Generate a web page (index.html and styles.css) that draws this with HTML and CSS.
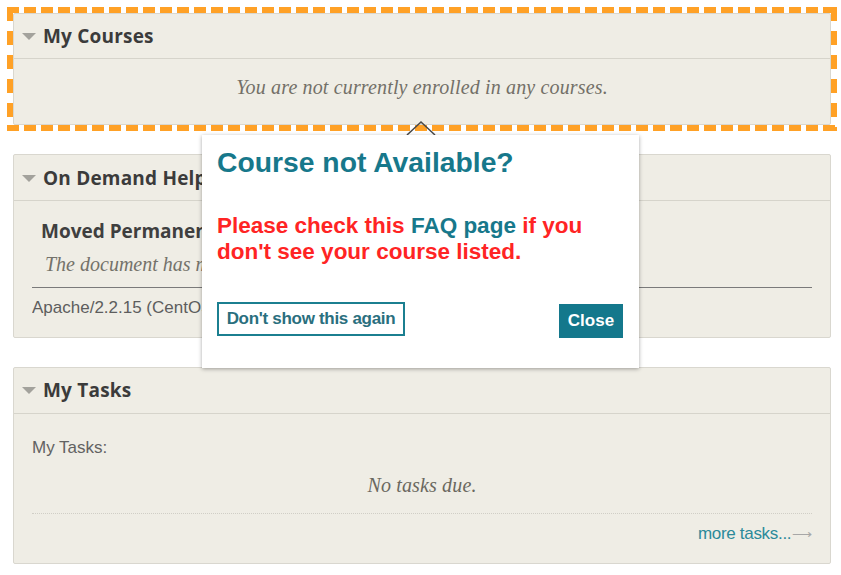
FILE: index.html
```html
<!DOCTYPE html>
<html>
<head>
<meta charset="utf-8">
<link rel="stylesheet" href="styles.css">
</head>
<body>
<div class="page">
  <div class="highlight">
    <section class="panel courses">
      <header class="panel-head"><span class="tri"></span><h2>My Courses</h2></header>
      <div class="panel-body center-msg">
        <p class="empty">You are not currently enrolled in any courses.</p>
      </div>
    </section>
  </div>

  <section class="panel help">
    <header class="panel-head"><span class="tri"></span><h2>On Demand Help</h2></header>
    <div class="panel-body help-body">
      <h1 class="moved">Moved Permanently</h1>
      <p class="doc">The document has moved <a href="#">here</a>.</p>
      <hr class="rule">
      <address class="server">Apache/2.2.15 (CentOS) Server at help.example.edu Port 80</address>
    </div>
  </section>

  <section class="panel tasks">
    <header class="panel-head"><span class="tri"></span><h2>My Tasks</h2></header>
    <div class="panel-body tasks-body">
      <p class="label">My Tasks:</p>
      <p class="empty no-tasks">No tasks due.</p>
      <div class="more-row"><a class="more" href="#">more tasks...<span class="arrow">⟶</span></a></div>
    </div>
  </section>
</div>

<svg class="pointer" width="32" height="16" viewBox="0 0 32 16">
  <polyline points="2,15 16,2 30,15" fill="none" stroke="#4a4a4a" stroke-width="1.6"/>
</svg>
<div class="popup">
  <h3 class="pop-title">Course not Available?</h3>
  <p class="pop-msg">Please check this <a href="#" class="faq">FAQ page</a> if you don't see your course listed.</p>
  <div class="pop-actions">
    <button class="btn-outline">Don't show this again</button>
    <button class="btn-solid">Close</button>
  </div>
</div>
</body>
</html>
```
FILE: styles.css
```css
* { box-sizing: border-box; }
html, body { margin: 0; padding: 0; background: #ffffff; }
body { width: 841px; height: 575px; overflow: hidden; position: relative; font-family: "Liberation Sans", Arial, sans-serif; }

.page { padding: 13px 10px 0 13px; }

.highlight {
  margin: -6px -6px 23px -6px;
  padding: 6px;
  background:
    repeating-linear-gradient(90deg, #ffa126 0 12px, transparent 12px 17px) left top / 100% 6px no-repeat,
    repeating-linear-gradient(90deg, #ffa126 0 12px, transparent 12px 17px) left bottom / 100% 6px no-repeat,
    repeating-linear-gradient(180deg, #ffa126 0 14px, transparent 14px 24px) left top / 6px 100% no-repeat,
    repeating-linear-gradient(180deg, #ffa126 0 14px, transparent 14px 24px) right top / 6px 100% no-repeat;
}

.panel {
  background: #efede5;
  border: 1px solid #d9d7cf;
  border-radius: 2px;
}
.help { margin-bottom: 29px; }

.panel-head {
  display: flex;
  align-items: center;
  height: 45px;
  padding-left: 8px;
  border-bottom: 1px solid #d6d4cb;
}
.help .panel-head, .tasks .panel-head { height: 46px; }
.tasks .panel-head { padding-bottom: 2px; }
.tri {
  width: 0; height: 0;
  border-left: 7px solid transparent;
  border-right: 7px solid transparent;
  border-top: 7px solid #a3a29c;
  margin-right: 7px;
  margin-top: 1px;
}
.panel-head h2 {
  margin: 0;
  font-family: "Open Sans", "Liberation Sans", sans-serif;
  font-weight: 700;
  font-size: 19px;
  color: #3b3b3b;
  letter-spacing: 0.2px;
}

.center-msg { height: 65px; display: flex; align-items: center; justify-content: center; padding-bottom: 8px; }
.empty {
  margin: 0;
  font-family: "Liberation Serif", "Times New Roman", serif;
  font-style: italic;
  font-size: 20px;
  letter-spacing: 0.15px;
  color: #737068;
}

.help-body { padding: 14px 18px 15px 18px; height: 136px; }
.moved {
  margin: 0 0 0 9px;
  font-family: "Open Sans", "Liberation Sans", sans-serif;
  font-weight: 700;
  font-size: 19px;
  color: #3f3f3f;
  line-height: 32px;
  white-space: nowrap;
}
.doc {
  margin: 0 0 0 13px;
  font-family: "Liberation Serif", serif;
  font-style: italic;
  font-size: 20px;
  color: #74726a;
  line-height: 34px;
  white-space: nowrap;
}
.doc a { color: #74726a; text-decoration: none; }
.rule { margin: 6px 0 0 0; border: 0; border-top: 1px solid #7a7a7a; }
.server {
  font-style: normal;
  font-size: 17px;
  color: #5d5d5d;
  line-height: 40px;
  white-space: nowrap;
  overflow: hidden;
}

.tasks-body { padding: 22px 18px 0 18px; height: 149px; }
.label { margin: 0; font-size: 17px; color: #626262; line-height: 24px; }
.no-tasks {
  text-align: center;
  line-height: 30px;
  margin-top: 10px;
  padding-bottom: 13px;
  border-bottom: 1px dotted #d0cec6;
  color: #6a685f;
}
.more-row { display: flex; justify-content: flex-end; padding-top: 10px; }
.more {
  color: #2b8a9a;
  text-decoration: none;
  font-size: 17px;
  letter-spacing: -0.3px;
}
.more .arrow { color: #a7a7a7; font-size: 14px; margin-left: 1px; }

.pointer { position: absolute; left: 405px; top: 120px; }
.popup {
  position: absolute;
  left: 202px;
  top: 135px;
  width: 437px;
  height: 233px;
  background: #ffffff;
  box-shadow: 0 1px 4px rgba(0,0,0,0.35);
  padding: 11px 16px 30px 15px;
  display: flex;
  flex-direction: column;
}
.pop-title {
  margin: 0;
  font-family: "Liberation Sans", Arial, sans-serif;
  font-weight: 700;
  font-size: 28.3px;
  line-height: 32px;
  color: #17788b;
}
.pop-msg {
  margin: 35px 0 0 0;
  max-width: 380px;
  font-family: "Liberation Sans", Arial, sans-serif;
  font-weight: 700;
  font-size: 22.5px;
  line-height: 26px;
  color: #ff2424;
}
.faq { color: #17788b; text-decoration: none; }
.pop-actions {
  margin-top: auto;
  display: flex;
  justify-content: space-between;
  align-items: center;
}
.btn-outline {
  height: 34px;
  width: 188px;
  padding: 0;
  background: #ffffff;
  border: 2px solid #1b7f90;
  font-family: "Liberation Sans", Arial, sans-serif;
  font-weight: 700;
  font-size: 17px;
  color: #2a6f7e;
  letter-spacing: -0.3px;
  white-space: nowrap;
}
.btn-solid {
  height: 34px;
  width: 64px;
  background: #14788c;
  border: 0;
  font-family: "Liberation Sans", Arial, sans-serif;
  font-weight: 700;
  font-size: 17px;
  color: #ffffff;
  margin-top: 4px;
}
```
